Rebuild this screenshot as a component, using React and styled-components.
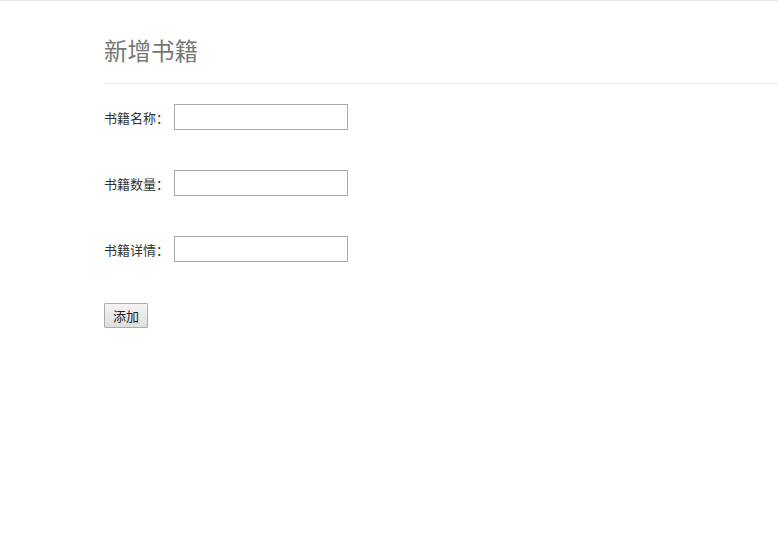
import React from 'react';
import styled, { createGlobalStyle } from 'styled-components';

const GlobalStyle = createGlobalStyle`
  html, body {
    margin: 0;
    padding: 0;
    background: #fff;
    font-family: "Liberation Sans", "Noto Sans CJK SC", sans-serif;
  }
`;

const Page = styled.div`
  border-top: 1px solid #e6e8eb;
  min-height: 547px;
`;

const Header = styled.div`
  margin-left: 104px;
  padding: 34px 0 14px;
  border-bottom: 1px solid #eeeeee;
`;

const Title = styled.h1`
  margin: 0;
  font-size: 23.5px;
  line-height: 34px;
  font-weight: 400;
  color: #777;
`;

const Form = styled.form`
  display: flex;
  flex-direction: column;
  align-items: flex-start;
  gap: 40px;
  padding: 20px 0 0 104px;
`;

const Row = styled.div`
  display: flex;
  align-items: center;
  gap: 5px;
`;

const Label = styled.label`
  font-size: 13px;
  color: #333;
  white-space: nowrap;
`;

const Input = styled.input`
  box-sizing: border-box;
  width: 174px;
  height: 26px;
  margin: 0;
  border: 1px solid #a9a9a9;
  outline: none;
  padding: 2px 4px;
  font-size: 13px;
`;

const Button = styled.button`
  box-sizing: border-box;
  width: 44px;
  height: 25px;
  margin: 1px 0 0;
  padding: 0;
  border: 1px solid #adadad;
  border-radius: 1px;
  background: linear-gradient(#f4f4f4, #dedede);
  font-family: inherit;
  font-size: 13px;
  color: #222;
`;

const fields = [
  { id: 'name', label: '书籍名称：' },
  { id: 'count', label: '书籍数量：' },
  { id: 'detail', label: '书籍详情：' },
];

export default function App() {
  return (
    <>
      <GlobalStyle />
      <Page>
        <Header>
          <Title>新增书籍</Title>
        </Header>
        <Form onSubmit={e => e.preventDefault()}>
          {fields.map(f => (
            <Row key={f.id}>
              <Label htmlFor={f.id}>{f.label}</Label>
              <Input id={f.id} type="text" />
            </Row>
          ))}
          <Button type="submit">添加</Button>
        </Form>
      </Page>
    </>
  );
}
